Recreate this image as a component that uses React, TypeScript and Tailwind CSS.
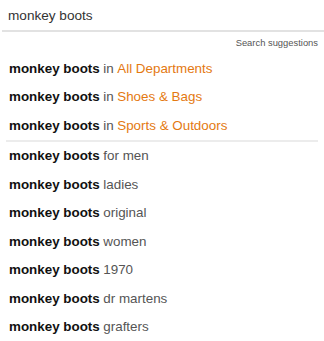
import React from 'react';

const QUERY = 'monkey boots';

const DEPARTMENTS = ['All Departments', 'Shoes & Bags', 'Sports & Outdoors'];
const SUGGESTIONS = ['for men', 'ladies', 'original', 'women', '1970', 'dr martens', 'grafters'];

const font = { fontFamily: '"Liberation Sans", Arial, sans-serif' };

export default function App() {
  return (
    <div className="w-[324px] h-[341px] bg-white overflow-hidden" style={font}>
      {/* search input */}
      <div className="h-[30px] pl-[8px] pt-[7px] text-[13.6px] text-[#333] leading-[18px]">{QUERY}</div>
      <div className="ml-[2px] h-[2px] bg-[#e2e2e2]" />

      <div className="h-[22px] flex items-center justify-end pr-[6px] text-[9.4px] text-[#555]">
        Search suggestions
      </div>

      <ul>
        {DEPARTMENTS.map(d => (
          <li key={d} className="h-[28.5px] flex items-center pl-[9px] text-[13.4px] leading-none">
            <span className="font-bold text-[#111]">{QUERY}</span>
            <span className="text-[#555] ml-[3.5px]">in</span>
            <span className="text-[#e47911] ml-[3.5px]">{d}</span>
          </li>
        ))}
      </ul>

      <div className="ml-[6px] mr-[6px] h-[2px] bg-[#ececec]" />

      <ul>
        {SUGGESTIONS.map(s => (
          <li key={s} className="h-[28.5px] flex items-center pl-[9px] text-[13.4px] leading-none">
            <span className="font-bold text-[#111]">{QUERY}</span>
            <span className="text-[#555] ml-[3.5px]">{s}</span>
          </li>
        ))}
      </ul>
    </div>
  );
}
